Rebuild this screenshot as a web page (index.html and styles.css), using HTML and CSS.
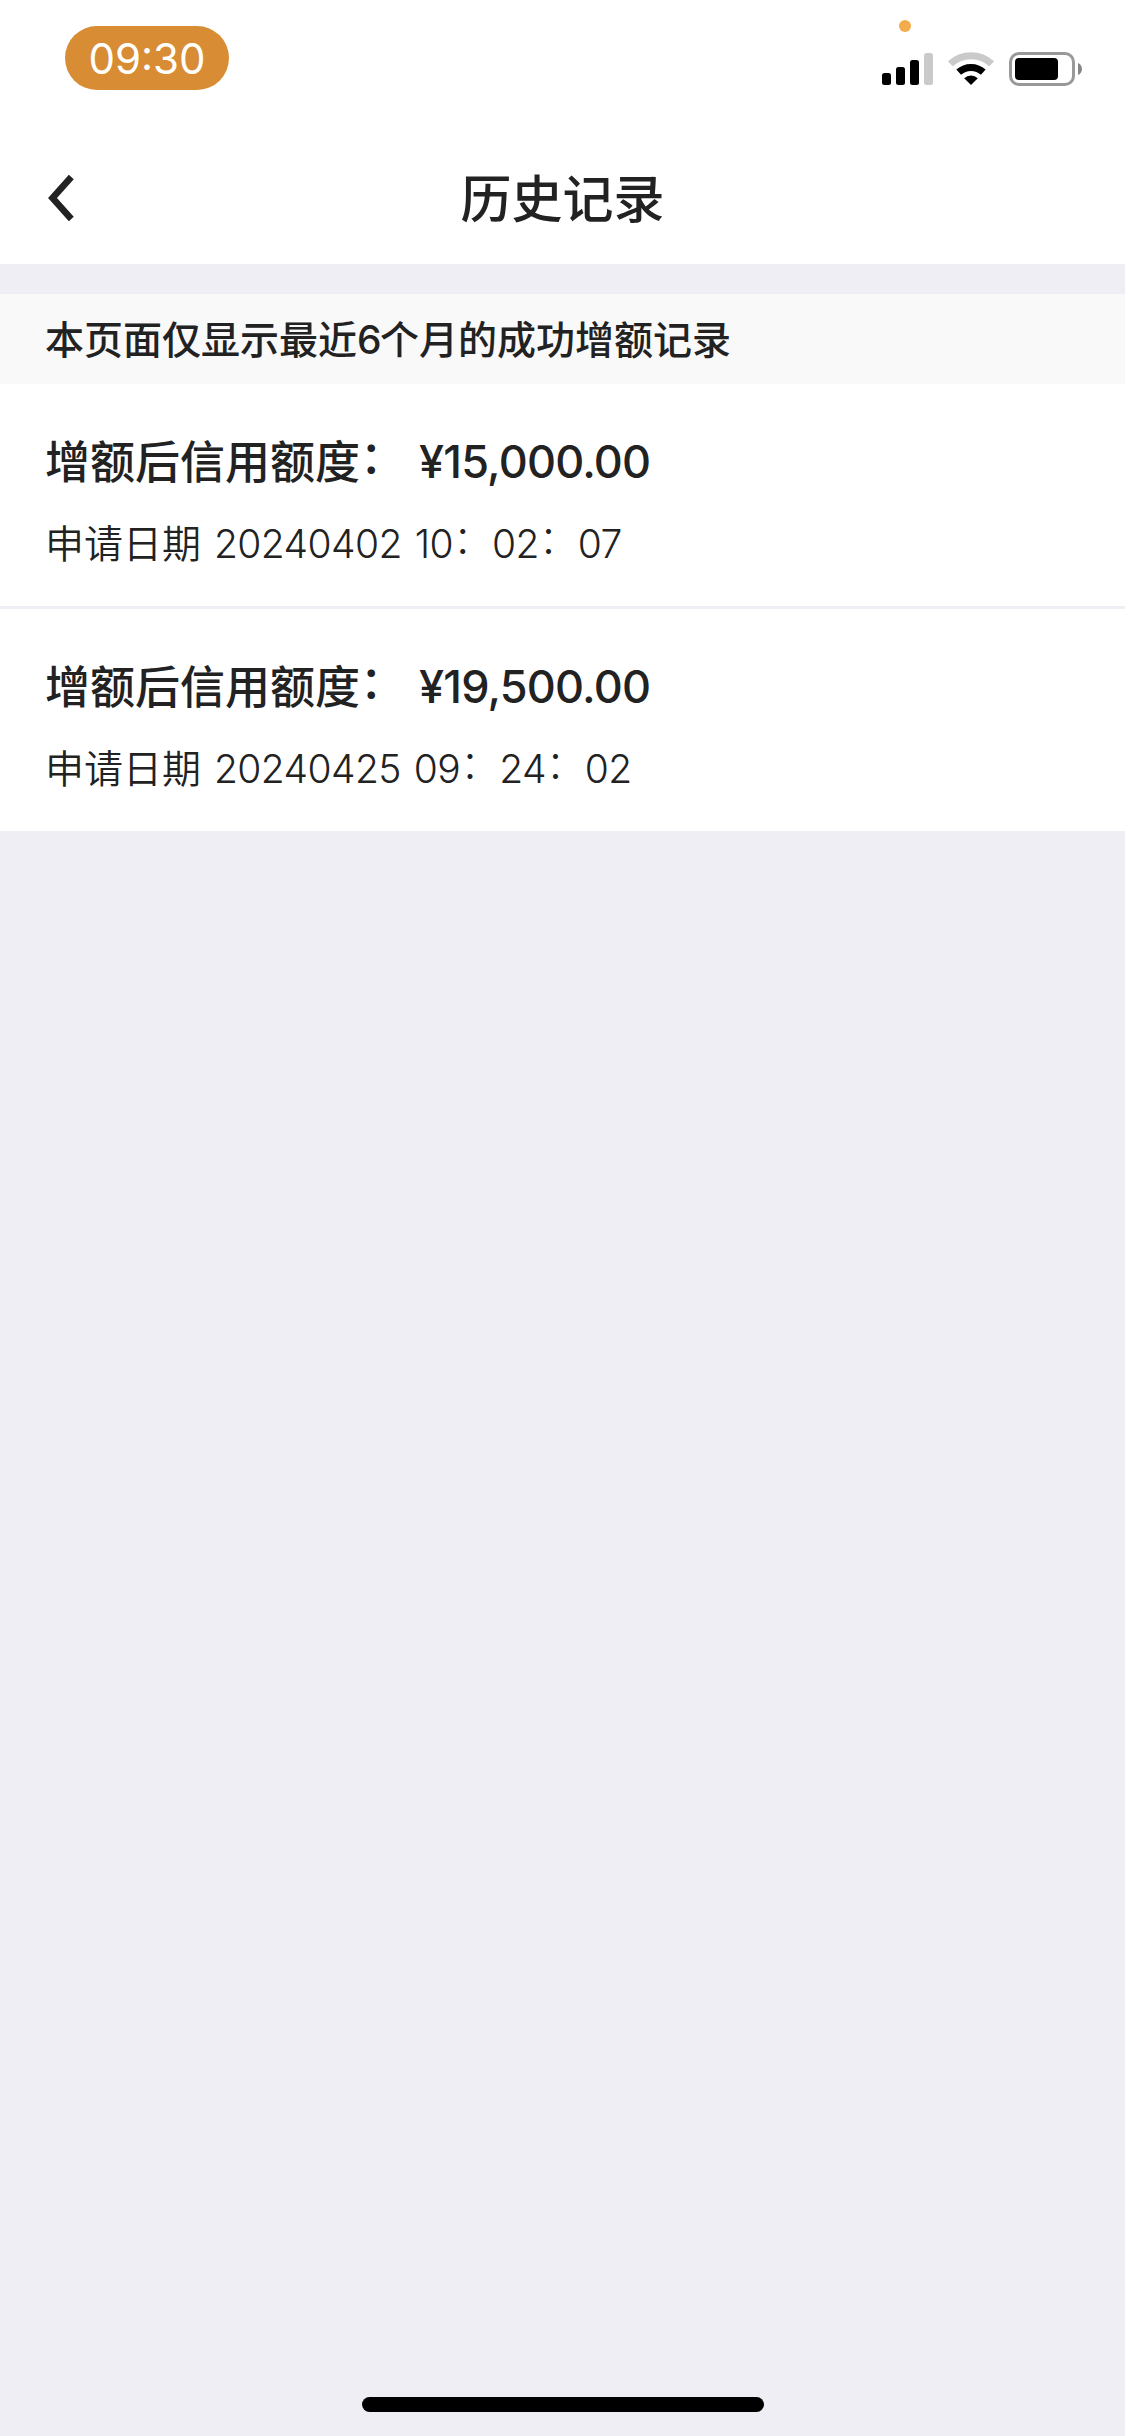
FILE: index.html
```
<!DOCTYPE html>
<html lang="zh-CN">
<head>
<meta charset="utf-8">
<title>历史记录</title>
<link rel="stylesheet" href="styles.css">
</head>
<body>
<div class="screen">
  <div class="status-bar">
    <div class="clock">09:30</div>
    <svg class="indicators" width="204" height="70" viewBox="0 0 204 70" aria-hidden="true">
      <circle cx="25" cy="6" r="6" fill="#f3ab4c"/>
      <rect x="2" y="53" width="9" height="12" rx="2.5"/>
      <rect x="16" y="47" width="9" height="18" rx="2.5"/>
      <rect x="30" y="40" width="9" height="25" rx="2.5"/>
      <rect x="44" y="33" width="9" height="32" rx="2.5" fill="#cacaca"/>
      <path d="M70.3 43.800A30.500 30.500 0 0 1 111.700 43.800" fill="none" stroke="#cacaca" stroke-width="7"/>
      <path d="M78.700 52.200A18.200 18.200 0 0 1 103.300 52.200" fill="none" stroke="#000" stroke-width="7"/>
      <path d="M84.200 58.200A10 10 0 0 1 97.800 58.200L91 65Z"/>
      <rect x="130.500" y="33.500" width="63" height="31" rx="8.500" fill="none" stroke="#999" stroke-width="3"/>
      <rect x="135" y="38" width="43" height="22" rx="4"/>
      <path d="M198 43C203.300 45 203.300 53 198 55Z" fill="#868686"/>
    </svg>
  </div>
  <header class="nav">
    <svg class="back" width="27" height="48" viewBox="0 0 27 48" aria-hidden="true">
      <path d="M23.300 3L4.500 24L23.300 45" fill="none" stroke="#222" stroke-width="6.600"/>
    </svg>
    <h1 class="title">历史记录</h1>
  </header>
  <p class="notice">本页面仅显示最近<span class="count">6</span>个月的成功增额记录</p>
  <ul class="records">
    <li class="record">
      <div class="limit"><span class="label">增额后信用额度<span class="colon">：</span></span><span class="amount">¥15,000.00</span></div>
      <div class="date"><span class="caption">申请日期</span><span class="day">20240402</span><span class="time">10<span class="colon">：</span>02<span class="colon">：</span>07</span></div>
    </li>
    <li class="record">
      <div class="limit"><span class="label">增额后信用额度<span class="colon">：</span></span><span class="amount">¥19,500.00</span></div>
      <div class="date"><span class="caption">申请日期</span><span class="day">20240425</span><span class="time">09<span class="colon">：</span>24<span class="colon">：</span>02</span></div>
    </li>
  </ul>
  <div class="home-indicator"></div>
</div>
</body>
</html>
```
FILE: styles.css
```
* {
  box-sizing: border-box;
  margin: 0;
  padding: 0;
}

body {
  background: #efeef4;
  color: #222;
  font-family: Inter, "Noto Sans CJK SC", sans-serif;
}

.screen {
  display: flex;
  flex-direction: column;
  width: 1125px;
  height: 2436px;
}

.status-bar {
  display: flex;
  justify-content: space-between;
  align-items: flex-start;
  height: 132px;
  padding: 20px 41px 0 65px;
  background: #fff;
}

.clock {
  width: 164px;
  height: 64px;
  margin-top: 6px;
  border-radius: 32px;
  background: #d88c33;
  color: #fff;
  font-size: 42px;
  line-height: 65px;
  text-align: center;
}

.nav {
  display: grid;
  grid-template-columns: 200px 1fr 200px;
  align-items: center;
  height: 132px;
  background: #fff;
}

.back {
  margin-left: 48px;
}

.title {
  padding-top: 3px;
  font-size: 51px;
  font-weight: 500;
  line-height: 72px;
  text-align: center;
}

.notice {
  height: 90px;
  margin-top: 30px;
  padding-left: 45px;
  background: #f9f9f9;
  font-size: 39px;
  font-weight: 500;
  line-height: 91px;
}

.count {
  letter-spacing: -1.5px;
}

.records {
  list-style: none;
  background: #fff;
}

.record {
  height: 222px;
  padding: 46px 45px 0;
}

.record + .record {
  box-sizing: content-box;
  height: 176px;
  border-top: 3px solid #efeef4;
}

.limit {
  display: flex;
  gap: 14px;
  font-size: 45px;
  font-weight: 500;
  line-height: 64px;
}

.label {
  padding-top: 1px;
}

.amount {
  letter-spacing: -0.8px;
}

.colon {
  display: inline-block;
  line-height: 1;
  letter-spacing: 0;
  transform: translateY(-0.12em);
}

.date {
  display: flex;
  gap: 13px;
  margin-top: 21px;
  font-size: 39px;
  font-weight: 300;
  line-height: 56px;
}

.caption {
  font-weight: 350;
}

.day,
.time {
  letter-spacing: -0.6px;
}

.home-indicator {
  width: 402px;
  height: 15px;
  margin: auto auto 24px 362px;
  border-radius: 8px;
  background: #000;
}
```
